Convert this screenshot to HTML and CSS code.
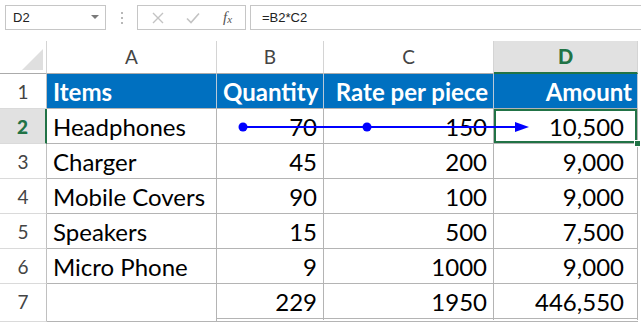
FILE: index.html
```html
<!DOCTYPE html>
<html lang="en">

<head>
    <meta charset="UTF-8">
    <meta name="viewport" content="width=device-width, initial-scale=1.0">
    <title>Amount formula</title>
    <link rel="stylesheet" href="styles.css">
</head>

<body>
    <div class="formula-bar">
        <div class="name-box">
            <span>D2</span>
            <span class="caret"></span>
        </div>
        <div class="grip">
            <span></span><span></span><span></span>
        </div>
        <div class="fx-buttons">
            <span class="slot">
                <svg width="12" height="12" viewBox="0 0 12 12">
                    <path d="M1 1L11 11M11 1L1 11" stroke="#c3c3c3" stroke-width="1.4" fill="none" />
                </svg>
            </span>
            <span class="slot">
                <svg width="14" height="12" viewBox="0 0 14 12">
                    <path d="M1 6.5L5 10.5L13 1.5" stroke="#c3c3c3" stroke-width="1.6" fill="none" />
                </svg>
            </span>
            <span class="slot fx"><i>f</i><i class="x">x</i></span>
        </div>
        <div class="formula-input">=B2*C2</div>
    </div>

    <div class="sheet">
        <!-- column headers -->
        <div class="ch corner"><span class="tri"></span></div>
        <div class="ch">A</div>
        <div class="ch">B</div>
        <div class="ch">C</div>
        <div class="ch active">D</div>

        <!-- row 1 -->
        <div class="rh">1</div>
        <div class="cell hd">Items</div>
        <div class="cell hd num">Quantity</div>
        <div class="cell hd num">Rate per piece</div>
        <div class="cell hd num">Amount</div>

        <!-- row 2 -->
        <div class="rh active">2</div>
        <div class="cell">Headphones</div>
        <div class="cell num">70</div>
        <div class="cell num">150</div>
        <div class="cell num amt sel">10,500</div>

        <div class="rh">3</div>
        <div class="cell">Charger</div>
        <div class="cell num">45</div>
        <div class="cell num">200</div>
        <div class="cell num amt">9,000</div>

        <div class="rh">4</div>
        <div class="cell">Mobile Covers</div>
        <div class="cell num">90</div>
        <div class="cell num">100</div>
        <div class="cell num amt">9,000</div>

        <div class="rh">5</div>
        <div class="cell">Speakers</div>
        <div class="cell num">15</div>
        <div class="cell num">500</div>
        <div class="cell num amt">7,500</div>

        <div class="rh">6</div>
        <div class="cell">Micro Phone</div>
        <div class="cell num">9</div>
        <div class="cell num">1000</div>
        <div class="cell num amt">9,000</div>

        <div class="rh">7</div>
        <div class="cell"></div>
        <div class="cell num total">229</div>
        <div class="cell num total">1950</div>
        <div class="cell num amt total">446,550</div>

        <!-- trace precedents arrow -->
        <svg class="trace" width="638" height="290" viewBox="0 0 638 290">
            <line x1="243" y1="86" x2="517" y2="86" stroke="#0000ff" stroke-width="2" />
            <circle cx="243" cy="86" r="4.5" fill="#0000ff" />
            <circle cx="367" cy="86" r="4.5" fill="#0000ff" />
            <polygon points="515,81 529,86 515,91" fill="#0000ff" />
        </svg>
    </div>
</body>

</html>
```

FILE: styles.css
```css
body {
    margin: 0;
    background: #fff;
    font-family: "Lato", "Liberation Sans", sans-serif;
}

/* formula bar */
.formula-bar {
    display: flex;
    align-items: flex-start;
    height: 41px;
    padding: 5px 0 0 5px;
    box-sizing: border-box;
    overflow: hidden;
    font-family: "Liberation Sans", sans-serif;
    font-size: 13px;
    color: #222;
}

.name-box {
    width: 101px;
    height: 25px;
    box-sizing: border-box;
    border: 1px solid #c6c6c6;
    display: flex;
    align-items: center;
    justify-content: space-between;
    padding: 0 6px 0 7px;
}

.caret {
    width: 0;
    height: 0;
    border-left: 4px solid transparent;
    border-right: 4px solid transparent;
    border-top: 4px solid #7a7a7a;
    margin-top: -2px;
}

.grip {
    width: 31px;
    height: 25px;
    display: flex;
    flex-direction: column;
    align-items: center;
    justify-content: center;
    gap: 3px;
}

.grip span {
    width: 2px;
    height: 2px;
    background: #b8b8b8;
}

.fx-buttons {
    width: 109px;
    height: 25px;
    box-sizing: border-box;
    border: 1px solid #c6c6c6;
    display: flex;
    align-items: center;
    padding-left: 2px;
}

.slot {
    width: 35px;
    display: flex;
    justify-content: center;
    align-items: center;
}

.fx {
    font-family: "Liberation Serif", serif;
    font-size: 15px;
    color: #555;
}

.fx .x {
    font-size: 11px;
    margin-top: 3px;
}

.formula-input {
    flex: 1;
    height: 25px;
    box-sizing: border-box;
    margin-left: 4px;
    border: 1px solid #c6c6c6;
    border-right: none;
    padding-left: 11px;
    line-height: 23px;
}

/* sheet grid */
.sheet {
    position: relative;
    display: grid;
    grid-template-columns: 47px 170px 107px 170px 144px;
    grid-template-rows: 33px repeat(6, 35px) 38px;
    width: 638px;
}

.ch {
    box-sizing: border-box;
    border-right: 1px solid #d4d4d4;
    border-bottom: 1px solid #ababab;
    text-align: center;
    line-height: 32px;
    font-size: 19px;
    color: #444;
}

.ch.corner {
    position: relative;
}

.tri {
    position: absolute;
    right: 3px;
    bottom: 3px;
    width: 0;
    height: 0;
    border-left: 21px solid transparent;
    border-bottom: 21px solid #dfdfdf;
}

.ch.active {
    background: #e1e1e1;
    border-bottom: 2px solid #217346;
    color: #217346;
    font-weight: 900;
    font-size: 20px;
    line-height: 31px;
}

.rh {
    box-sizing: border-box;
    border-right: 1px solid #c0c0c0;
    border-bottom: 1px solid #dadada;
    text-align: center;
    line-height: 35px;
    font-size: 19px;
    color: #444;
}

.rh.active {
    background: #e1e1e1;
    border-right: 2px solid #217346;
    color: #217346;
    font-weight: 900;
}

.cell {
    box-sizing: border-box;
    border-right: 1px solid #b4b4b4;
    border-bottom: 1px solid #b4b4b4;
    padding: 0 6px;
    font-size: 24px;
    line-height: 35px;
    color: #000;
    white-space: nowrap;
}

.cell.num {
    text-align: right;
}

.cell.amt {
    padding-right: 13px;
}

.cell.hd {
    background: #0070c0;
    color: #fff;
    font-weight: bold;
    border-right-color: #b9c9d8;
    padding-right: 5px;
}

.cell.total {
    border-bottom: 4px double #b4b4b4;
}

.cell.sel {
    position: relative;
    box-shadow: inset 0 0 0 2px #217346;
}

.cell.sel::after {
    content: "";
    position: absolute;
    right: -4px;
    bottom: -4px;
    width: 5px;
    height: 5px;
    background: #217346;
    border: 1px solid #fff;
}

.trace {
    position: absolute;
    left: 0;
    top: 0;
    pointer-events: none;
}
```
